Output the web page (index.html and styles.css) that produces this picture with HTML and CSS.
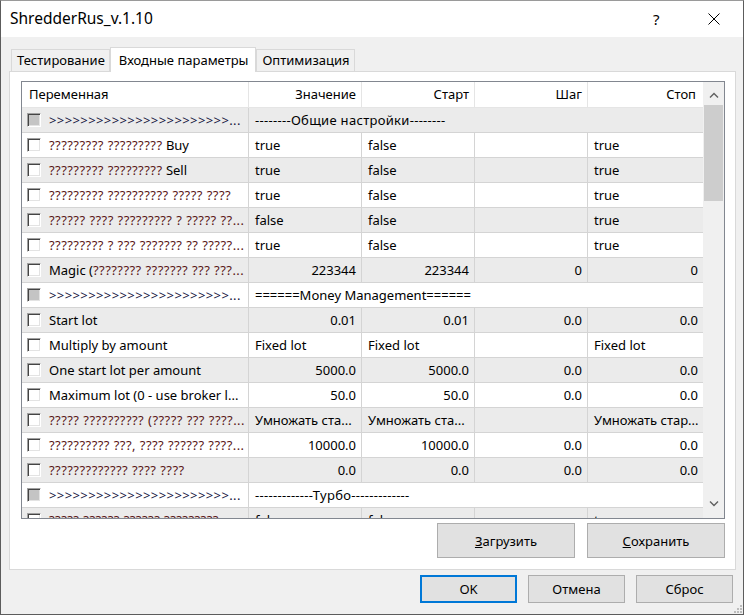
FILE: index.html
```html
<!DOCTYPE html>
<html lang="ru">

<head>
    <meta charset="UTF-8">
    <title>ShredderRus_v.1.10</title>
    <link rel="stylesheet" href="styles.css">
</head>

<body>
    <div class="window">
        <div class="titlebar">
            <span class="title">ShredderRus_v.1.10</span>
            <span class="help">?</span>
            <span class="close">
                <svg width="12" height="12" viewBox="0 0 12 12"><path d="M0.5 0.5 L11.5 11.5 M11.5 0.5 L0.5 11.5" stroke="#000" stroke-width="1" fill="none"/></svg>
            </span>
        </div>

        <div class="tabs">
            <div class="tab">Тестирование</div>
            <div class="tab active">Входные параметры</div>
            <div class="tab">Оптимизация</div>
        </div>

        <div class="panel">
            <div class="list">
                <div class="list-body">
                    <div class="head">
                        <div class="hcell left">Переменная</div>
                        <div class="hcell">Значение</div>
                        <div class="hcell">Старт</div>
                        <div class="hcell">Шаг</div>
                        <div class="hcell last">Стоп</div>
                    </div>

                    <div class="row sep">
                        <div class="cell name"><i class="cb off"></i><span class="gt">&gt;&gt;&gt;&gt;&gt;&gt;&gt;&gt;&gt;&gt;&gt;&gt;&gt;&gt;&gt;&gt;&gt;&gt;&gt;&gt;&gt;&gt;&gt;...</span></div>
                        <div class="cell span"><span class="dash">--------Общие настройки--------</span></div>
                    </div>
                    <div class="row">
                        <div class="cell name"><i class="cb"></i><span class="q">????????? ?????????</span>&nbsp;Buy</div>
                        <div class="cell">true</div>
                        <div class="cell">false</div>
                        <div class="cell"></div>
                        <div class="cell last">true</div>
                    </div>
                    <div class="row">
                        <div class="cell name"><i class="cb"></i><span class="q">????????? ?????????</span>&nbsp;Sell</div>
                        <div class="cell">true</div>
                        <div class="cell">false</div>
                        <div class="cell"></div>
                        <div class="cell last">true</div>
                    </div>
                    <div class="row">
                        <div class="cell name"><i class="cb"></i><span class="q">????????? ?????????? ????? ????</span></div>
                        <div class="cell">true</div>
                        <div class="cell">false</div>
                        <div class="cell"></div>
                        <div class="cell last">true</div>
                    </div>
                    <div class="row">
                        <div class="cell name"><i class="cb"></i><span class="q">?????? ???? ????????? ? ????? ??...</span></div>
                        <div class="cell">false</div>
                        <div class="cell">false</div>
                        <div class="cell"></div>
                        <div class="cell last">true</div>
                    </div>
                    <div class="row">
                        <div class="cell name"><i class="cb"></i><span class="q">????????? ? ??? ??????? ?? ?????...</span></div>
                        <div class="cell">true</div>
                        <div class="cell">false</div>
                        <div class="cell"></div>
                        <div class="cell last">true</div>
                    </div>
                    <div class="row">
                        <div class="cell name"><i class="cb"></i>Magic (<span class="q">???????? ??????? ??? ???...</span></div>
                        <div class="cell num">223344</div>
                        <div class="cell num">223344</div>
                        <div class="cell num">0</div>
                        <div class="cell num last">0</div>
                    </div>
                    <div class="row sep">
                        <div class="cell name"><i class="cb off"></i><span class="gt">&gt;&gt;&gt;&gt;&gt;&gt;&gt;&gt;&gt;&gt;&gt;&gt;&gt;&gt;&gt;&gt;&gt;&gt;&gt;&gt;&gt;&gt;&gt;...</span></div>
                        <div class="cell span">======Money Management======</div>
                    </div>
                    <div class="row">
                        <div class="cell name"><i class="cb"></i>Start lot</div>
                        <div class="cell num">0.01</div>
                        <div class="cell num">0.01</div>
                        <div class="cell num">0.0</div>
                        <div class="cell num last">0.0</div>
                    </div>
                    <div class="row">
                        <div class="cell name"><i class="cb"></i>Multiply by amount</div>
                        <div class="cell">Fixed lot</div>
                        <div class="cell">Fixed lot</div>
                        <div class="cell"></div>
                        <div class="cell last">Fixed lot</div>
                    </div>
                    <div class="row">
                        <div class="cell name"><i class="cb"></i>One start lot per amount</div>
                        <div class="cell num">5000.0</div>
                        <div class="cell num">5000.0</div>
                        <div class="cell num">0.0</div>
                        <div class="cell num last">0.0</div>
                    </div>
                    <div class="row">
                        <div class="cell name"><i class="cb"></i>Maximum lot (0 - use broker l...</div>
                        <div class="cell num">50.0</div>
                        <div class="cell num">50.0</div>
                        <div class="cell num">0.0</div>
                        <div class="cell num last">0.0</div>
                    </div>
                    <div class="row">
                        <div class="cell name"><i class="cb"></i><span class="q">????? ?????????? (????? ??? ????...</span></div>
                        <div class="cell">Умножать ста...</div>
                        <div class="cell">Умножать ста...</div>
                        <div class="cell"></div>
                        <div class="cell last">Умножать стар...</div>
                    </div>
                    <div class="row">
                        <div class="cell name"><i class="cb"></i><span class="q">?????????? ???, ???? ?????? ????...</span></div>
                        <div class="cell num">10000.0</div>
                        <div class="cell num">10000.0</div>
                        <div class="cell num">0.0</div>
                        <div class="cell num last">0.0</div>
                    </div>
                    <div class="row">
                        <div class="cell name"><i class="cb"></i><span class="q">????????????? ???? ????</span></div>
                        <div class="cell num">0.0</div>
                        <div class="cell num">0.0</div>
                        <div class="cell num">0.0</div>
                        <div class="cell num last">0.0</div>
                    </div>
                    <div class="row sep">
                        <div class="cell name"><i class="cb off"></i><span class="gt">&gt;&gt;&gt;&gt;&gt;&gt;&gt;&gt;&gt;&gt;&gt;&gt;&gt;&gt;&gt;&gt;&gt;&gt;&gt;&gt;&gt;&gt;&gt;...</span></div>
                        <div class="cell span"><span class="dash">-------------Турбо-------------</span></div>
                    </div>
                    <div class="row">
                        <div class="cell name"><i class="cb"></i><span class="q">????? ?????? ?????? ?????????...</span></div>
                        <div class="cell">false</div>
                        <div class="cell">false</div>
                        <div class="cell"></div>
                        <div class="cell last">true</div>
                    </div>
                </div>

                <div class="scrollbar">
                    <div class="arrow">
                        <svg width="10" height="6" viewBox="0 0 10 6"><path d="M1 5.5 L5 1.5 L9 5.5" stroke="#606060" stroke-width="1.4" fill="none"/></svg>
                    </div>
                    <div class="track">
                        <div class="thumb"></div>
                    </div>
                    <div class="arrow">
                        <svg width="10" height="6" viewBox="0 0 10 6"><path d="M1 0.5 L5 4.5 L9 0.5" stroke="#606060" stroke-width="1.4" fill="none"/></svg>
                    </div>
                </div>
            </div>

            <div class="file-buttons">
                <button class="btn big"><u>З</u>агрузить</button>
                <button class="btn big"><u>С</u>охранить</button>
            </div>
        </div>

        <div class="dialog-buttons">
            <button class="btn default">OK</button>
            <button class="btn">Отмена</button>
            <button class="btn">Сброс</button>
        </div>

        <div class="grip">
            <svg width="9" height="9" viewBox="0 0 9 9">
                <rect x="7" y="1" width="2" height="2" fill="#bcbcbc"/>
                <rect x="4" y="4" width="2" height="2" fill="#bcbcbc"/>
                <rect x="7" y="4" width="2" height="2" fill="#bcbcbc"/>
                <rect x="1" y="7" width="2" height="2" fill="#bcbcbc"/>
                <rect x="4" y="7" width="2" height="2" fill="#bcbcbc"/>
                <rect x="7" y="7" width="2" height="2" fill="#bcbcbc"/>
            </svg>
        </div>
    </div>
</body>

</html>
```

FILE: styles.css
```css
body {
    margin: 0;
    font-family: "Noto Sans", "Open Sans", sans-serif;
    font-size: 13px;
    color: #000;
    background: #f0f0f0;
}

.window {
    position: relative;
    box-sizing: border-box;
    width: 744px;
    height: 615px;
    border: 1px solid #5c5c5c;
    border-top-color: #9a9a9a;
    background: #f0f0f0;
    display: flex;
    flex-direction: column;
}

.titlebar {
    height: 36px;
    background: #fff;
    display: flex;
    align-items: center;
    padding-left: 9px;
}

.title {
    font-size: 15.5px;
    flex: 1;
    padding-bottom: 2px;
}

.help {
    font-size: 15px;
    width: 10px;
    margin-right: 45px;
}

.close {
    display: flex;
    margin-right: 23px;
}

/* tabs */
.tabs {
    display: flex;
    align-items: flex-end;
    height: 24px;
    margin-top: 10px;
    padding-left: 10px;
}

.tab {
    box-sizing: border-box;
    height: 22px;
    padding: 0 4px 0 5px;
    border: 1px solid #d9d9d9;
    border-bottom: none;
    background: #f0f0f0;
    display: flex;
    align-items: center;
    line-height: 1;
}

.tab.active {
    height: 25px;
    margin-bottom: -1px;
    background: #fff;
    padding: 0 7px 0 8px;
    position: relative;
    z-index: 1;
}

.panel {
    box-sizing: border-box;
    height: 499px;
    margin: 0 7px 0 8px;
    padding: 9px 10px 11px 11px;
    background: #fff;
    border: 1px solid #d9d9d9;
    display: flex;
    flex-direction: column;
}

/* list view */
.list {
    box-sizing: border-box;
    height: 438px;
    border: 1px solid #828790;
    display: flex;
    overflow: hidden;
}

.list-body {
    width: 681px;
    overflow: hidden;
}

.head,
.row {
    display: grid;
    grid-template-columns: 227px 113px 113px 113px 115px;
    height: 25px;
    box-sizing: border-box;
}

.head {
    height: 26px;
    border-bottom: 1px solid #e5e5e5;
}

.hcell {
    box-sizing: border-box;
    border-right: 1px solid #e5e5e5;
    display: flex;
    align-items: center;
    justify-content: flex-end;
    padding: 0 5px 1px 7px;
    white-space: nowrap;
}

.hcell.left {
    justify-content: flex-start;
}

.hcell.last {
    border-right: none;
    padding-right: 7px;
}

.row {
    border-bottom: 1px solid #d4d4d4;
    background: #fff;
}

.row:nth-child(even) {
    background: #ebebeb;
}

.cell {
    box-sizing: border-box;
    border-right: 1px solid #d4d4d4;
    display: flex;
    align-items: center;
    padding: 0 5px 1px 6px;
    white-space: nowrap;
    overflow: hidden;
}

.cell.last {
    border-right: none;
}

.cell.num {
    justify-content: flex-end;
}

.cell.name {
    padding-left: 5px;
}

.cell.span {
    grid-column: span 4;
    border-right: none;
}

.q {
    color: #5a1616;
    letter-spacing: 0.45px;
}

.gt {
    color: #151540;
    letter-spacing: 0.4px;
}

.dash {
    letter-spacing: 0.3px;
}

.cb {
    box-sizing: border-box;
    width: 14px;
    height: 14px;
    margin-right: 8px;
    flex-shrink: 0;
    background: #fff;
    border: 1px solid;
    border-color: #a0a0a0 #fff #fff #a0a0a0;
    box-shadow: inset 1px 1px #444, inset -1px -1px #e3e3e3;
}

.cb.off {
    background: #c4c4c4;
}

/* scrollbar */
.scrollbar {
    width: 21px;
    background: #f0f0f0;
    display: flex;
    flex-direction: column;
}

.arrow {
    height: 17px;
    display: flex;
    align-items: center;
    justify-content: center;
    padding-top: 4px;
}

.arrow:last-child {
    padding-top: 0;
    padding-bottom: 6px;
}

.track {
    flex: 1;
    padding: 2px 1px 0 1px;
}

.thumb {
    height: 96px;
    background: #cdcdcd;
}

/* buttons */
.file-buttons {
    display: flex;
    justify-content: flex-end;
    gap: 12px;
    margin-top: 4px;
}

.btn {
    box-sizing: border-box;
    width: 97px;
    height: 28px;
    font-family: "Noto Sans", "Open Sans", sans-serif;
    font-size: 13px;
    color: #000;
    background: #e1e1e1;
    border: 1px solid #adadad;
    padding: 0;
}

.btn.big {
    width: 138px;
    height: 35px;
}

.btn.default {
    border: 2px solid #0078d7;
}

.dialog-buttons {
    display: flex;
    justify-content: flex-end;
    gap: 11px;
    margin-top: 5px;
    padding-right: 10px;
}

.grip {
    position: absolute;
    right: 1px;
    bottom: 1px;
    display: flex;
}
```
